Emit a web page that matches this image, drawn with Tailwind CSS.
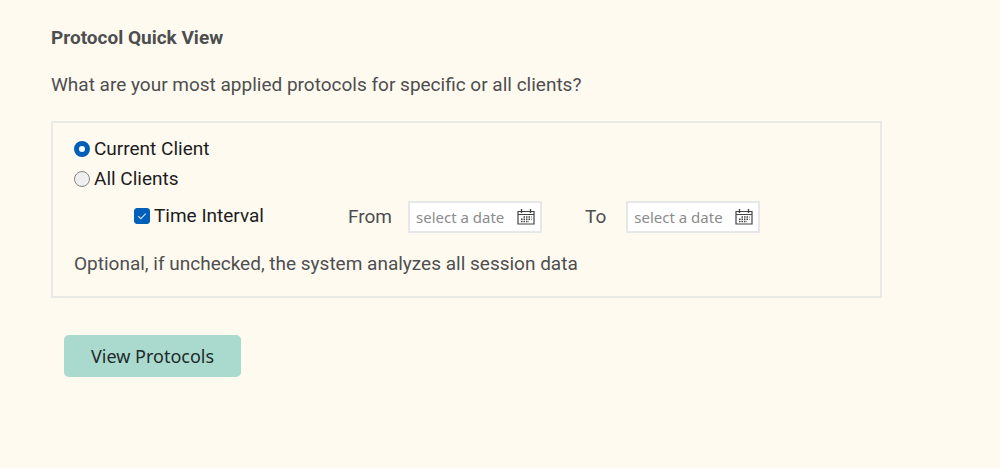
<!DOCTYPE html>
<html lang="en">
<head>
    <meta charset="UTF-8">
    <meta name="viewport" content="width=device-width, initial-scale=1.0">
    <title>Protocol Quick View</title>
    <script src="https://cdn.jsdelivr.net/npm/@tailwindcss/browser@4"></script>
</head>
<body class="min-h-screen bg-[#fffaef] font-[Roboto,sans-serif] text-[19px] leading-[30px] text-[#4d4e50]">

    <main class="max-w-[882px] pl-[51px] pt-[23px]">
        <h1 class="font-bold">Protocol Quick View</h1>
        <p class="mt-[17px]">What are your most applied protocols for specific or all clients?</p>

        <form id="protocols__form">
            <fieldset class="mt-[21px] border-2 border-[#e9e9e6] px-[21px] pt-[11px] pb-[17px]">
                <div class="flex items-center gap-1 text-[#1c1c1e]">
                    <input type="radio" id="current" name="client" checked
                        class="size-4 appearance-none rounded-full border border-[#858585] bg-[#efefef] checked:border-5 checked:border-[#005fb8] checked:bg-white">
                    <label for="current">Current Client</label>
                </div>
                <div class="flex items-center gap-1 text-[#1c1c1e]">
                    <input type="radio" id="all" name="client"
                        class="size-4 appearance-none rounded-full border border-[#858585] bg-[#efefef] checked:border-5 checked:border-[#005fb8] checked:bg-white">
                    <label for="all">All Clients</label>
                </div>

                <div class="mt-[7px] flex flex-wrap items-center pl-[60px]">
                    <div class="flex items-center gap-1 pb-[2px] text-[#1c1c1e]">
                        <span class="relative flex size-4">
                            <input type="checkbox" id="interval" checked
                                class="peer size-4 appearance-none rounded-[3px] border border-[#858585] bg-[#efefef] checked:border-[#005fb8] checked:bg-[#005fb8]">
                            <svg class="pointer-events-none absolute inset-0 hidden peer-checked:block" viewBox="0 0 16 16" fill="none" stroke="#cfe2f4" stroke-width="1.1">
                                <path d="M4.2 8.2 6.8 10.7 11.8 5.6"/>
                            </svg>
                        </span>
                        <label for="interval">Time Interval</label>
                    </div>

                    <label for="from" class="ml-[84px]">From</label>
                    <div class="ml-4 flex h-8 w-[134px] items-center border-2 border-[#e6e7e8] bg-white pl-[6px] pr-[5px]">
                        <input type="text" id="from" placeholder="select a date"
                            class="min-w-0 flex-1 font-['Noto_Sans',sans-serif] text-[15px] leading-5 placeholder:text-[#8b8b8b] focus:outline-none">
                        <button type="button" aria-label="Pick start date">
                            <svg class="h-4 w-[18px]" viewBox="0 0 18 16" fill="none" stroke="#444">
                                <path d="M1 2.5H17V15H1Z" stroke-width="1.2"/>
                                <path d="M1 5.5H17" stroke-width="1"/>
                                <path d="M4.5 0V4M13.5 0V4" stroke-width="1.4"/>
                                <path d="M6.5 8H14.5M4 10.3H14.5M4 12.6H12" stroke-width="1.5" stroke-dasharray="1.5 1"/>
                            </svg>
                        </button>
                    </div>

                    <label for="to" class="ml-[43px]">To</label>
                    <div class="ml-5 flex h-8 w-[134px] items-center border-2 border-[#e6e7e8] bg-white pl-[6px] pr-[5px]">
                        <input type="text" id="to" placeholder="select a date"
                            class="min-w-0 flex-1 font-['Noto_Sans',sans-serif] text-[15px] leading-5 placeholder:text-[#8b8b8b] focus:outline-none">
                        <button type="button" aria-label="Pick end date">
                            <svg class="h-4 w-[18px]" viewBox="0 0 18 16" fill="none" stroke="#444">
                                <path d="M1 2.5H17V15H1Z" stroke-width="1.2"/>
                                <path d="M1 5.5H17" stroke-width="1"/>
                                <path d="M4.5 0V4M13.5 0V4" stroke-width="1.4"/>
                                <path d="M6.5 8H14.5M4 10.3H14.5M4 12.6H12" stroke-width="1.5" stroke-dasharray="1.5 1"/>
                            </svg>
                        </button>
                    </div>
                </div>

                <p class="mt-4">Optional, if unchecked, the system analyzes all session data</p>
            </fieldset>

            <button type="submit"
                class="mt-[37px] ml-[13px] h-[42px] rounded-[5px] bg-[#aadacd] px-[27px] font-['Noto_Sans',sans-serif] text-[18px] text-[#1e2a2c] hover:bg-[#98cfc0] transition-all">
                View Protocols
            </button>
        </form>
    </main>

    <script>
    const interval = document.querySelector("#interval");

    interval.addEventListener("change", function() {
        document.querySelector("#from").disabled = !interval.checked;
        document.querySelector("#to").disabled = !interval.checked;
    });

    document.getElementById("protocols__form").addEventListener("submit", function(event) {
        event.preventDefault();
    });
    </script>
</body>
</html>
